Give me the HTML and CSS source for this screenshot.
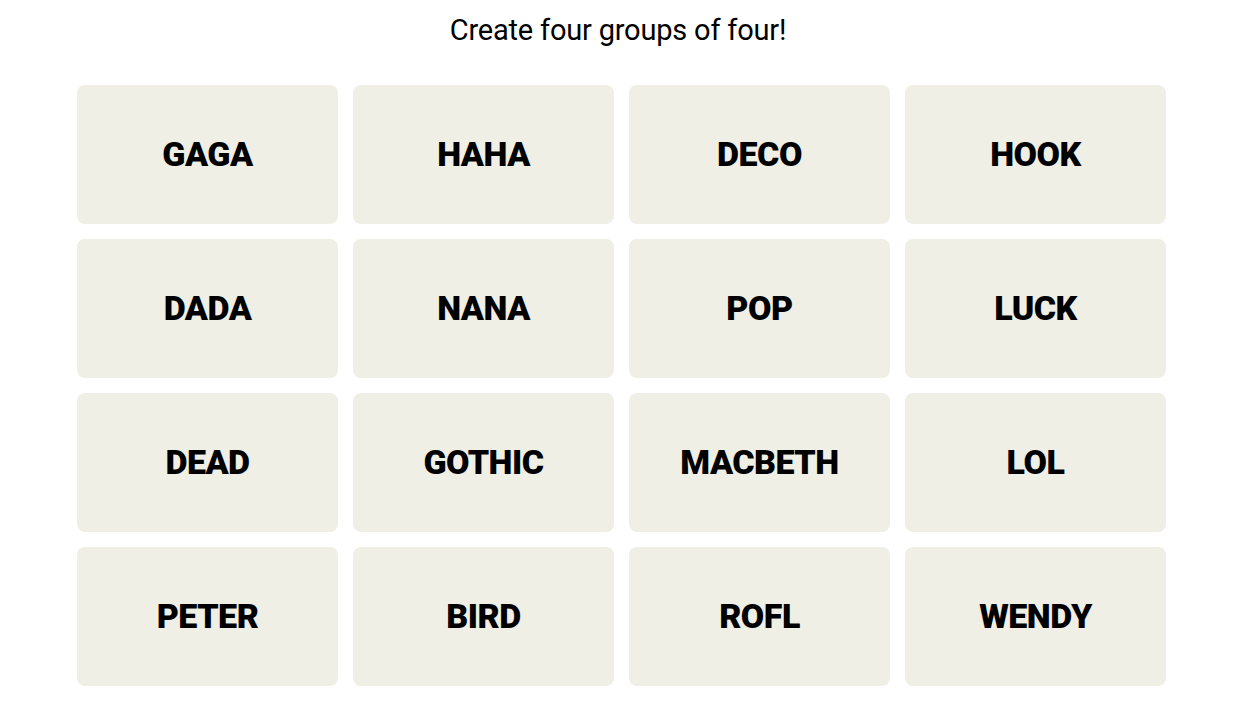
FILE: index.html
```html
<!DOCTYPE html>
<html>
<head>
  <meta charset="utf-8">
  <title>Connections</title>
  <link rel="stylesheet" href="styles.css">
</head>
<body>
  <div class="game">
    <h1 class="prompt">Create four groups of four!</h1>

    <div class="board">
      <button class="card">GAGA</button>
      <button class="card">HAHA</button>
      <button class="card">DECO</button>
      <button class="card">HOOK</button>
      <button class="card">DADA</button>
      <button class="card">NANA</button>
      <button class="card">POP</button>
      <button class="card">LUCK</button>
      <button class="card">DEAD</button>
      <button class="card">GOTHIC</button>
      <button class="card">MACBETH</button>
      <button class="card">LOL</button>
      <button class="card">PETER</button>
      <button class="card">BIRD</button>
      <button class="card">ROFL</button>
      <button class="card">WENDY</button>
    </div>
  </div>
</body>
</html>
```

FILE: styles.css
```css
body {
  margin: 0;
  background: #fff;
  font-family: Roboto, 'Liberation Sans', sans-serif;
  color: #000;
}
.game {
  width: 1089px;
  margin-left: 77px;
}
.prompt {
  margin: 0;
  padding-top: 11px;
  padding-right: 7px;
  height: 85px;
  box-sizing: border-box;
  font-size: 29px;
  font-weight: 400;
  line-height: 38px;
  letter-spacing: -0.2px;
  text-align: center;
}
.board {
  display: grid;
  grid-template-columns: repeat(4, 1fr);
  grid-auto-rows: 139px;
  gap: 15px;
}
.card {
  border: none;
  border-radius: 8px;
  background-color: #efefe6;
  color: #000;
  font-family: Roboto, 'Liberation Sans', sans-serif;
  font-size: 34px;
  font-weight: 900;
  letter-spacing: -0.5px;
  cursor: pointer;
  padding: 0 0 2px;
}
```
